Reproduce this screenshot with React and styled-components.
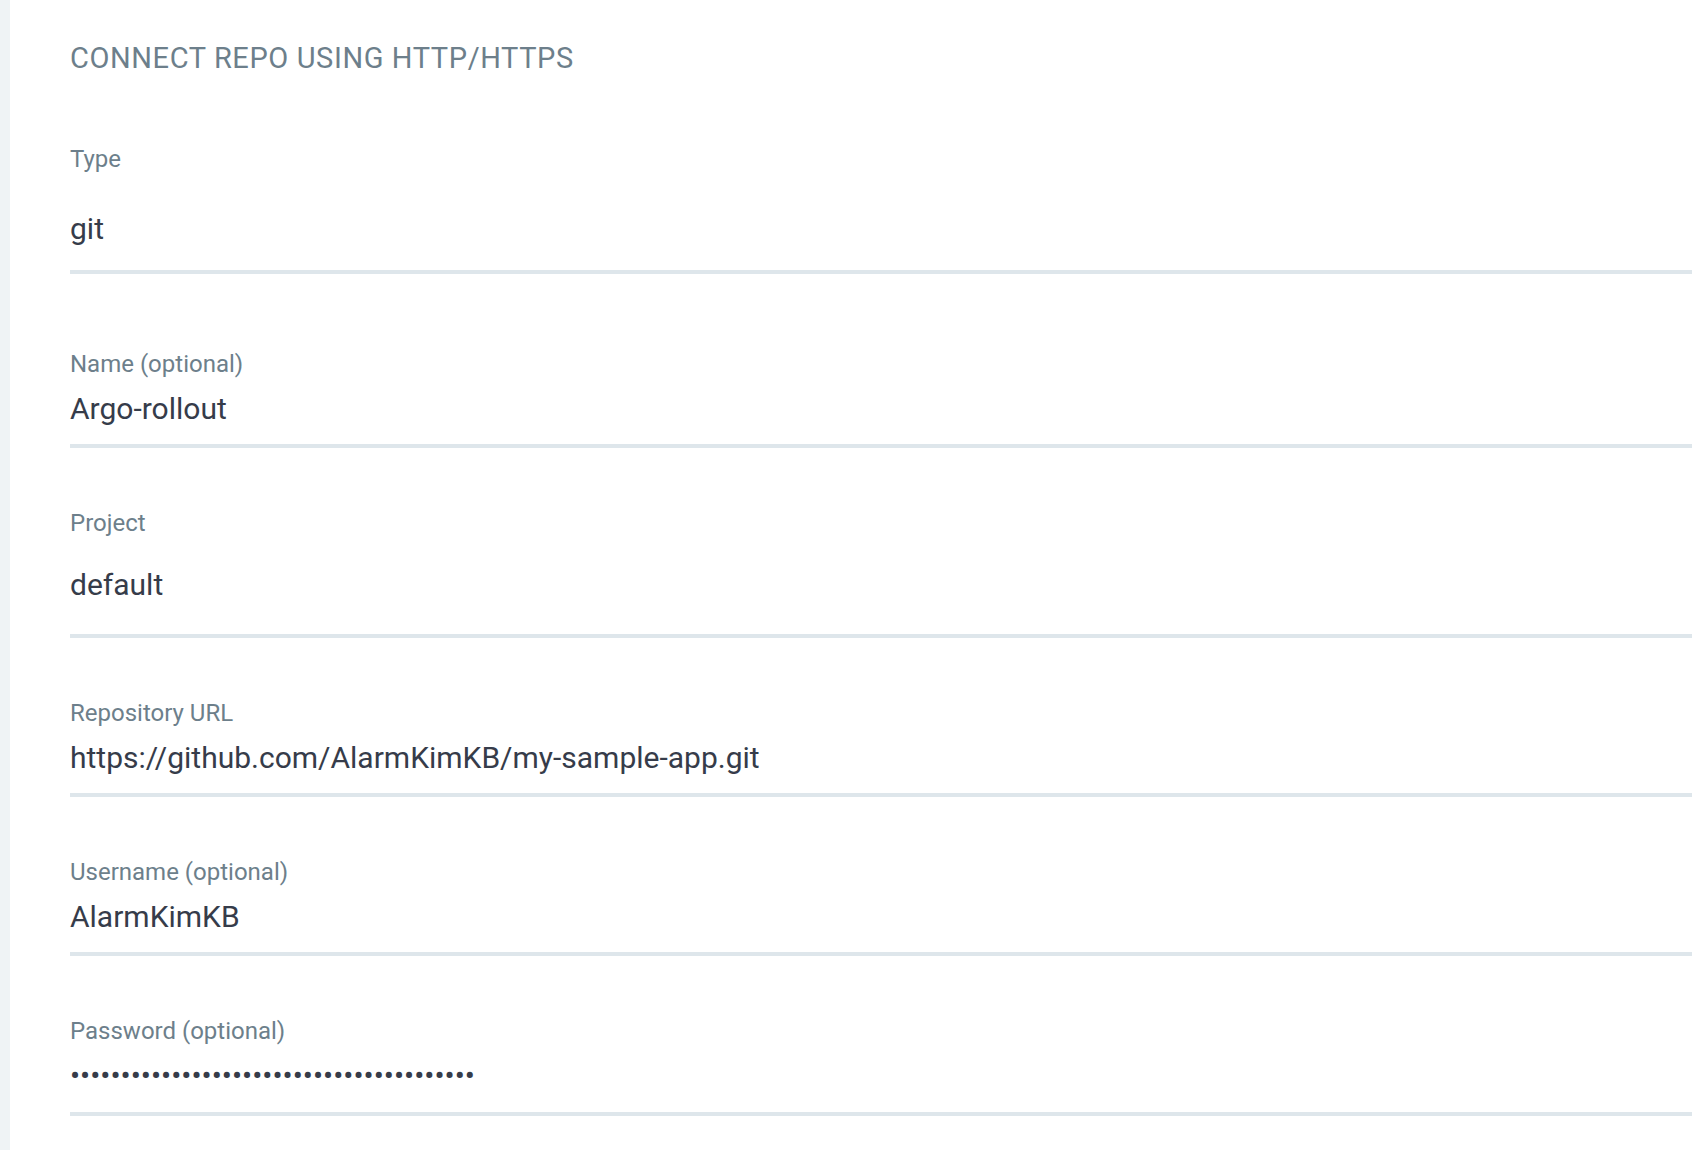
import React from "react";
import { createGlobalStyle, styled } from "styled-components";

const GlobalStyle = createGlobalStyle`
  html, body {
    margin: 0;
    padding: 0;
    background: #ffffff;
  }
  body {
    font-family: Roboto, "Liberation Sans", sans-serif;
  }
`;

const Page = styled.div`
  display: flex;
  min-height: 100vh;
  background: #ffffff;
`;

const SideRail = styled.div`
  width: 10px;
  flex-shrink: 0;
  background: #eff3f5;
`;

const Panel = styled.div`
  flex: 1;
  padding: 41px 0 0 60px;
`;

const Title = styled.h2`
  margin: 0;
  font-size: 29px;
  line-height: 34px;
  font-weight: 400;
  letter-spacing: 0.6px;
  color: #6d7f8b;
  text-transform: uppercase;
`;

const Field = styled.div`
  margin-top: ${(p) => p.$gap}px;
  border-bottom: 4px solid #dee6eb;
`;

const Label = styled.div`
  font-size: 24px;
  line-height: 28px;
  color: #6d7f8b;
`;

// selects sit lower under their label than text inputs do
const Value = styled.div`
  font-size: 30px;
  line-height: 36px;
  color: #363c4a;
  padding-top: ${(p) => p.$top}px;
  padding-bottom: ${(p) => p.$bottom}px;
  white-space: nowrap;
`;

const fields = [
  { label: "Type", value: "git", top: 38, bottom: 23, gap: 70 },
  { label: "Name (optional)", value: "Argo-rollout", top: 13, bottom: 17, gap: 76 },
  { label: "Project", value: "default", top: 30, bottom: 31, gap: 61 },
  {
    label: "Repository URL",
    value: "https://github.com/AlarmKimKB/my-sample-app.git",
    top: 13,
    bottom: 17,
    gap: 61,
  },
  { label: "Username (optional)", value: "AlarmKimKB", top: 13, bottom: 17, gap: 61 },
  { label: "Password (optional)", value: "•".repeat(40), top: 13, bottom: 18, gap: 61 },
];

const App = () => {
  return (
    <>
      <GlobalStyle />
      <Page>
        <SideRail />
        <Panel>
          <Title>Connect repo using HTTP/HTTPS</Title>
          {fields.map((f) => (
            <Field key={f.label} $gap={f.gap}>
              <Label>{f.label}</Label>
              <Value $top={f.top} $bottom={f.bottom}>
                {f.value}
              </Value>
            </Field>
          ))}
        </Panel>
      </Page>
    </>
  );
};

export default App;
